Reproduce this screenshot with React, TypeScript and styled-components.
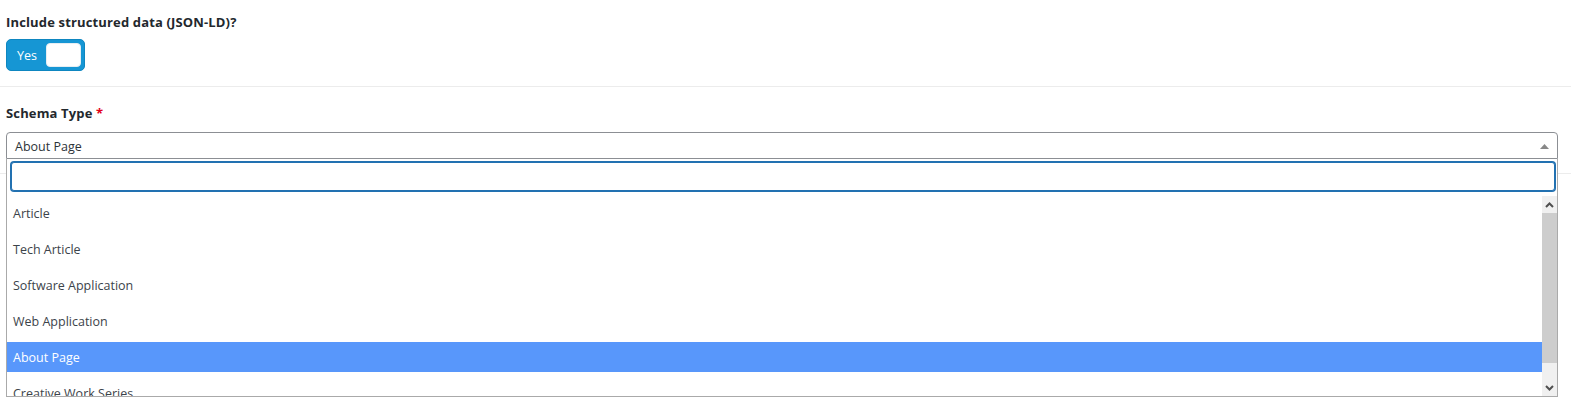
import React from 'react'
import styled, { createGlobalStyle, css } from 'styled-components'

const GlobalStyle = createGlobalStyle`
  body {
    margin: 0;
    background: #fff;
    font-family: 'Open Sans', 'Noto Sans', Arial, sans-serif;
    color: #23282d;
  }
`

const Page = styled.div`
  width: 1571px;
  height: 405px;
  overflow: hidden;
`

const Section = styled.div<{ $top: number; $bottom: number }>`
  padding: ${p => p.$top}px 13px ${p => p.$bottom}px 6px;
  border-bottom: 1px solid #ececec;
`

const Label = styled.div`
  font-size: 13px;
  font-weight: 700;
  line-height: 16px;
  letter-spacing: 0.15px;
  color: #23282d;
`

const Required = styled.span`
  color: #e2001a;
`

const Toggle = styled.div`
  margin-top: 9px;
  width: 79px;
  height: 32px;
  box-sizing: border-box;
  display: flex;
  align-items: center;
  background: #1696d4;
  border: 1px solid #0e86c0;
  border-radius: 5px;
`

const ToggleText = styled.span`
  flex: 1;
  text-align: center;
  color: #fff;
  font-size: 12.5px;
  padding-left: 1px;
`

const Knob = styled.span`
  width: 35px;
  height: 24px;
  margin-right: 3px;
  box-sizing: border-box;
  background: #fff;
  border: 1px solid #e6eef3;
  border-radius: 4px;
`

const SelectWrap = styled.div`
  position: relative;
  margin-top: 11px;
`

const SelectBox = styled.div`
  height: 27px;
  box-sizing: border-box;
  border: 1px solid #8c8f94;
  border-radius: 4px 4px 0 0;
  display: flex;
  align-items: center;
  justify-content: space-between;
  padding: 1px 8px 0 8px;
  font-size: 12.5px;
  color: #2c3338;
`

const Dropdown = styled.div`
  position: absolute;
  top: 100%;
  left: 0;
  right: 0;
  background: #fff;
  border: 1px solid #aaa;
  border-top: none;
  z-index: 5;
`

const SearchRow = styled.div`
  padding: 3px 2px 5px 4px;
`

const SearchInput = styled.input`
  display: block;
  width: 100%;
  height: 29px;
  box-sizing: border-box;
  border: 1px solid #2271b1;
  box-shadow: 0 0 0 1px #2271b1;
  border-radius: 3px;
  outline: none;
  font-size: 12px;
  font-family: inherit;
`

const ListArea = styled.div`
  display: flex;
  height: 200px;
`

const List = styled.ul`
  flex: 1;
  margin: 0;
  padding: 2px 0 0;
  list-style: none;
  overflow: hidden;
`

const Item = styled.li<{ $active?: boolean }>`
  height: 30px;
  line-height: 31px;
  margin-bottom: 6px;
  padding-left: 6px;
  font-size: 12.5px;
  color: #3c434a;
  ${p =>
    p.$active &&
    css`
      background: #5897fb;
      color: #fff;
    `}
`

const Scrollbar = styled.div`
  width: 15px;
  display: flex;
  flex-direction: column;
  background: #f0f0f0;
`

const ScrollButton = styled.div`
  height: 17px;
  display: flex;
  align-items: center;
  justify-content: center;
`

const Thumb = styled.div`
  height: 150px;
  background: #cdcdcd;
`

const Track = styled.div`
  flex: 1;
`

const Chevron = ({ up }: { up?: boolean }) => (
  <svg width='9' height='6' viewBox='0 0 9 6'>
    <path
      d={up ? 'M1 5 L4.5 1.5 L8 5' : 'M1 1 L4.5 4.5 L8 1'}
      fill='none'
      stroke='#505050'
      strokeWidth='2'
    />
  </svg>
)

const options = [
  'Article',
  'Tech Article',
  'Software Application',
  'Web Application',
  'About Page',
  'Creative Work Series',
]

const App = () => {
  return (
    <Page>
      <GlobalStyle />
      <Section $top={14} $bottom={15}>
        <Label>Include structured data (JSON-LD)?</Label>
        <Toggle>
          <ToggleText>Yes</ToggleText>
          <Knob />
        </Toggle>
      </Section>
      <Section $top={18} $bottom={14}>
        <Label>
          Schema Type <Required>*</Required>
        </Label>
        <SelectWrap>
          <SelectBox>
            <span>About Page</span>
            <svg width='9' height='5' viewBox='0 0 9 5'>
              <path d='M0 5 L4.5 0 L9 5 Z' fill='#888' />
            </svg>
          </SelectBox>
          <Dropdown>
            <SearchRow>
              <SearchInput type='text' />
            </SearchRow>
            <ListArea>
              <List>
                {options.map(o => (
                  <Item key={o} $active={o === 'About Page'}>
                    {o}
                  </Item>
                ))}
              </List>
              <Scrollbar>
                <ScrollButton>
                  <Chevron up />
                </ScrollButton>
                <Thumb />
                <Track />
                <ScrollButton>
                  <Chevron />
                </ScrollButton>
              </Scrollbar>
            </ListArea>
          </Dropdown>
        </SelectWrap>
      </Section>
    </Page>
  )
}

export default App
